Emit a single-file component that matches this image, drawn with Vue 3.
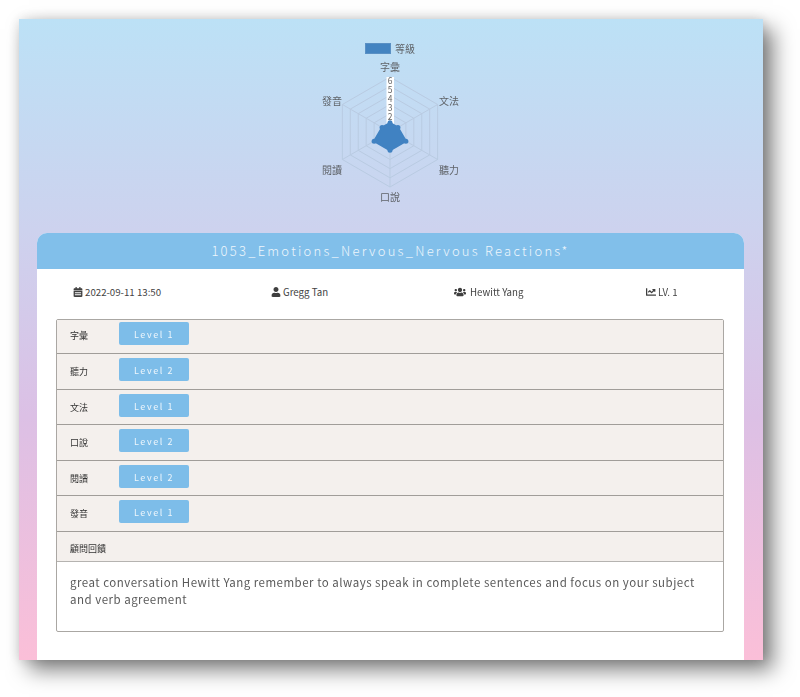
<script setup>
const cx = 390 - 19 - 200
const cy = 132 - 19 - 30
const unit = 55 / 6
const axes = [0, 1, 2, 3, 4, 5].map(i => {
  const a = (Math.PI / 3) * i
  return { x: Math.sin(a), y: -Math.cos(a) }
})
const poly = r => axes.map(p => `${(cx + p.x * r).toFixed(2)},${(cy + p.y * r).toFixed(2)}`).join(' ')
const rings = [1, 2, 3, 4, 5, 6].map(n => poly(n * unit))
const values = [1, 1, 2, 2, 2, 1]
const points = axes.map((p, i) => ({ x: cx + p.x * values[i] * unit, y: cy + p.y * values[i] * unit }))
const dataPoly = points.map(p => `${p.x.toFixed(2)},${p.y.toFixed(2)}`).join(' ')
const ticks = [6, 5, 4, 3, 2, 1]
const labels = [
  { t: '字彙', x: cx, y: cy - 61 },
  { t: '文法', x: cx + 59, y: cy - 27 },
  { t: '聽力', x: cx + 59, y: cy + 42 },
  { t: '口說', x: cx, y: cy + 69 },
  { t: '閱讀', x: cx - 58, y: cy + 42 },
  { t: '發音', x: cx - 58, y: cy - 27 }
]
const rows = [
  { name: '字彙', level: 'Level 1' },
  { name: '聽力', level: 'Level 2' },
  { name: '文法', level: 'Level 1' },
  { name: '口說', level: 'Level 2' },
  { name: '閱讀', level: 'Level 2' },
  { name: '發音', level: 'Level 1' }
]
</script>

<template>
  <div class="page">
    <div class="panel">
      <div class="chart">
        <svg class="radar" width="342" height="184" viewBox="0 0 342 184">
          <rect x="146.500" y="-5.500" width="25" height="10" fill="#4484c1" stroke="#5a90c4" />
          <text x="176" y="4" class="lab" text-anchor="start">等級</text>
          <polygon v-for="(r, i) in rings" :key="i" :points="r" class="ring" />
          <line v-for="(p, i) in axes" :key="'a' + i" :x1="cx" :y1="cy" :x2="cx + p.x * 55" :y2="cy + p.y * 55" class="ring" />
          <rect :x="cx - 3.500" :y="cy - 55" width="7.500" height="48" fill="#fff" />
          <text v-for="(n, i) in ticks" :key="'t' + i" :x="cx" :y="cy - 48 + i * 9" class="tick" text-anchor="middle">{{ n }}</text>
          <polygon :points="dataPoly" fill="#4082c2" stroke="#4082c2" stroke-width="2" />
          <circle v-for="(p, i) in points" :key="'c' + i" :cx="p.x" :cy="p.y" r="2.500" fill="#4082c2" />
          <text v-for="l in labels" :key="l.t" :x="l.x" :y="l.y" class="lab" text-anchor="middle">{{ l.t }}</text>
        </svg>
      </div>

      <div class="card">
        <div class="title">1053_Emotions_Nervous_Nervous Reactions*</div>
        <div class="meta">
          <span class="item">
            <svg class="ic" viewBox="0 0 448 512"><path d="M0 464c0 26.500 21.500 48 48 48h352c26.500 0 48-21.500 48-48V192H0v272zm64-192h320v48H64v-48zm0 96h320v48H64v-48zM400 64h-48V16c0-8.800-7.200-16-16-16h-32c-8.800 0-16 7.200-16 16v48H160V16c0-8.800-7.200-16-16-16h-32c-8.800 0-16 7.200-16 16v48H48C21.500 64 0 85.500 0 112v48h448v-48c0-26.500-21.500-48-48-48z" /></svg>
            2022-09-11 13:50
          </span>
          <span class="item">
            <svg class="ic" viewBox="0 0 448 512"><path d="M224 256c70.700 0 128-57.300 128-128S294.700 0 224 0 96 57.300 96 128s57.300 128 128 128zm89.600 32h-16.700c-22.200 10.200-46.900 16-72.900 16s-50.600-5.800-72.900-16h-16.700C60.200 288 0 348.200 0 422.400V464c0 26.500 21.500 48 48 48h352c26.500 0 48-21.500 48-48v-41.600c0-74.200-60.200-134.400-134.400-134.400z" /></svg>
            Gregg Tan
          </span>
          <span class="item wide-item">
            <svg class="ic wide" viewBox="0 0 640 512"><path d="M96 224c35.300 0 64-28.700 64-64s-28.700-64-64-64-64 28.700-64 64 28.700 64 64 64zm448 0c35.300 0 64-28.700 64-64s-28.700-64-64-64-64 28.700-64 64 28.700 64 64 64zm32 32h-64c-17.600 0-33.500 7.100-45.100 18.600 40.300 22.100 68.900 62 75.100 109.400h66c17.700 0 32-14.300 32-32v-32c0-35.300-28.700-64-64-64zm-256 0c61.900 0 112-50.100 112-112S381.900 32 320 32 208 82.100 208 144s50.100 112 112 112zm76.800 32h-8.300c-20.800 10-43.900 16-68.500 16s-47.600-6-68.500-16h-8.300C179.600 288 128 339.600 128 403.200V432c0 26.500 21.500 48 48 48h288c26.500 0 48-21.500 48-48v-28.800c0-63.600-51.600-115.200-115.200-115.200zm-223.700-13.400C161.500 263.100 145.600 256 128 256H64c-35.300 0-64 28.700-64 64v32c0 17.700 14.300 32 32 32h65.900c6.300-47.400 34.900-87.300 75.200-109.400z" /></svg>
            Hewitt Yang
          </span>
          <span class="item">
            <svg class="ic" viewBox="0 0 512 512"><path d="M496 384H64V80c0-8.840-7.160-16-16-16H16C7.160 64 0 71.160 0 80v336c0 17.670 14.330 32 32 32h464c8.840 0 16-7.160 16-16v-32c0-8.840-7.160-16-16-16zM464 96H345.940c-21.380 0-32.090 25.850-16.970 40.970l32.400 32.400L288 242.750l-73.370-73.370c-12.500-12.500-32.760-12.500-45.250 0l-68.690 68.690c-6.250 6.250-6.250 16.380 0 22.630l22.620 22.620c6.250 6.250 16.380 6.250 22.630 0L192 237.250l73.370 73.370c12.500 12.500 32.760 12.500 45.250 0l96-96 32.400 32.400c15.120 15.120 40.970 4.410 40.970-16.970V112c.01-8.840-7.150-16-16-16z" /></svg>
            LV. 1
          </span>
        </div>

        <div class="table">
          <div v-for="r in rows" :key="r.name" class="row">
            <span class="name">{{ r.name }}</span>
            <span class="level">{{ r.level }}</span>
          </div>
          <div class="row head"><span class="name">顧問回饋</span></div>
          <div class="comment">great conversation Hewitt Yang remember to always speak in complete sentences and focus on your subject and verb agreement</div>
        </div>
      </div>
    </div>
  </div>
</template>

<style>
html, body { margin: 0; background: #fff; }
</style>

<style scoped>
.page {
  width: 800px;
  height: 697px;
  padding: 19px 0 0 19px;
  box-sizing: border-box;
  overflow: hidden;
  font-family: "Noto Sans CJK TC", "Noto Sans", sans-serif;
}
.panel {
  width: 744px;
  height: 641px;
  padding: 0 19px 0 18px;
  box-sizing: border-box;
  background: linear-gradient(180deg, #bce1f6 0%, #cdd2ee 33%, #dcc0e5 62%, #fbbfd8 100%);
  box-shadow: 10px 10px 20px rgba(0, 0, 0, 0.5), 0 0 12px rgba(0, 0, 0, 0.14);
  display: flex;
  flex-direction: column;
  filter: blur(0.3px);
}
.chart {
  height: 214px;
  padding-top: 30px;
  box-sizing: border-box;
}
.radar {
  display: block;
  margin-left: 182px;
  overflow: visible;
}
.lab {
  font-size: 10px;
  fill: #5f6368;
}
.tick {
  font-size: 8.500px;
  fill: #666;
}
.ring {
  fill: none;
  stroke: #b9cbe2;
  stroke-width: 1;
}
.card {
  flex: 1;
  background: #fff;
  border-radius: 10px 10px 0 0;
}
.title {
  height: 36px;
  line-height: 35px;
  background: #81bfea;
  border-radius: 10px 10px 0 0;
  color: #eef6fc;
  text-align: center;
  font-size: 13px;
  letter-spacing: 2.25px;
  font-weight: 300;
}
.meta {
  display: grid;
  grid-template-columns: 198px 183px 192px auto;
  padding: 0 0 4px 36px;
  height: 50px;
  box-sizing: border-box;
  align-items: center;
  font-size: 9.700px;
  color: #444;
}
.item {
  display: flex;
  align-items: center;
  gap: 2px;
  white-space: nowrap;
}
.wide-item { gap: 4px; }
.ic {
  width: 10px;
  height: 10px;
  fill: #3f3f3f;
  flex: none;
}
.ic.wide { width: 12px; }
.table {
  margin: 0 20px 0 19px;
  border: 1px solid #aaa7a3;
  border-radius: 2px;
  height: 313px;
  box-sizing: border-box;
  display: flex;
  flex-direction: column;
}
.row {
  height: 35.6px;
  box-sizing: border-box;
  background: #f4f0ed;
  border-bottom: 1px solid #a09d99;
  display: flex;
  align-items: flex-start;
  padding: 4px 0 0 13px;
  flex: none;
}
.row:first-child {
  height: 34px;
  padding-top: 2px;
}
.row.head {
  height: 30px;
  padding-top: 0;
  align-items: center;
  border-bottom-color: #b5b3b0;
}
.name {
  width: 49px;
  height: 23px;
  line-height: 27px;
  font-size: 9px;
  color: #333;
}
.row.head .name { width: auto; }
.level {
  width: 70px;
  height: 23px;
  line-height: 25px;
  background: #7dbde9;
  border-radius: 2px;
  color: #eef6fc;
  font-size: 9px;
  letter-spacing: 1.6px;
  text-align: center;
}
.comment {
  padding: 12px 13px 0;
  font-size: 11.500px;
  line-height: 17px;
  letter-spacing: 0.5px;
  color: #5a5a5a;
}
</style>
